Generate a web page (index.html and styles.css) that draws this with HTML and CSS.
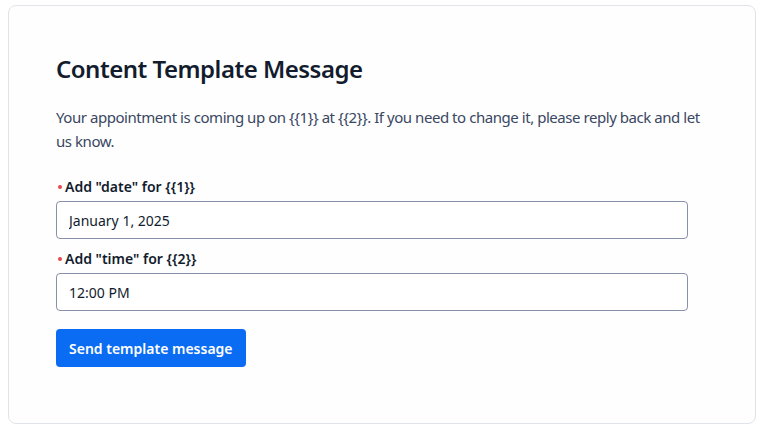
FILE: index.html
```html
<!DOCTYPE html>
<html>

<head>
    <title>Content Template Message</title>
    <link rel="stylesheet" href="styles.css">
</head>

<body>
    <div class="card">
        <h1 class="card-title">Content Template Message</h1>
        <p class="card-body">Your appointment is coming up on {{1}} at {{2}}. If you need to change it, please reply back and let us know.</p>

        <form class="tpl-form">
            <div class="field">
                <label class="field-label" for="var1"><span class="req"></span>Add "date" for {{1}}</label>
                <input id="var1" class="field-input" type="text" value="January 1, 2025">
            </div>
            <div class="field">
                <label class="field-label" for="var2"><span class="req"></span>Add "time" for {{2}}</label>
                <input id="var2" class="field-input" type="text" value="12:00 PM">
            </div>
            <button type="button" class="btn-primary">Send template message</button>
        </form>
    </div>
</body>

</html>
```

FILE: styles.css
```css
body {
    margin: 0;
    padding: 5px 5px 9px 8px;
    background-color: #fff;
    font-family: "Noto Sans", sans-serif;
    color: #121c2d;
}

.card {
    border: 1px solid #e1e3ea;
    border-radius: 8px;
    background-color: #fefefe;
    padding: 43px 48px 56px 47px;
}

.card-title {
    margin: 0 0 16px;
    font-size: 24px;
    line-height: 40px;
    font-weight: 600;
    letter-spacing: -0.5px;
}

.card-body {
    margin: 0 0 23px;
    font-size: 15px;
    line-height: 24px;
    letter-spacing: -0.45px;
    color: #394762;
}

.tpl-form {
    width: 632px;
}

.field {
    margin-bottom: 9px;
}

.field-label {
    display: flex;
    align-items: center;
    font-size: 14px;
    font-weight: 600;
    line-height: 22px;
    margin-bottom: 3px;
}

.req {
    width: 4px;
    height: 4px;
    border-radius: 50%;
    background-color: #e8474f;
    margin: 0 3px 0 2px;
}

.field-input {
    display: block;
    box-sizing: border-box;
    width: 100%;
    height: 38px;
    padding: 0 12px;
    border: 1px solid #8891aa;
    border-radius: 4px;
    background-color: #fff;
    font-family: inherit;
    font-size: 14px;
    color: #121c2d;
}

.btn-primary {
    margin-top: 9px;
    height: 38px;
    padding: 0 13px;
    border: 0;
    border-radius: 4px;
    background-color: #0a6cf2;
    color: #fff;
    font-family: inherit;
    font-size: 14px;
    font-weight: 600;
}
```
